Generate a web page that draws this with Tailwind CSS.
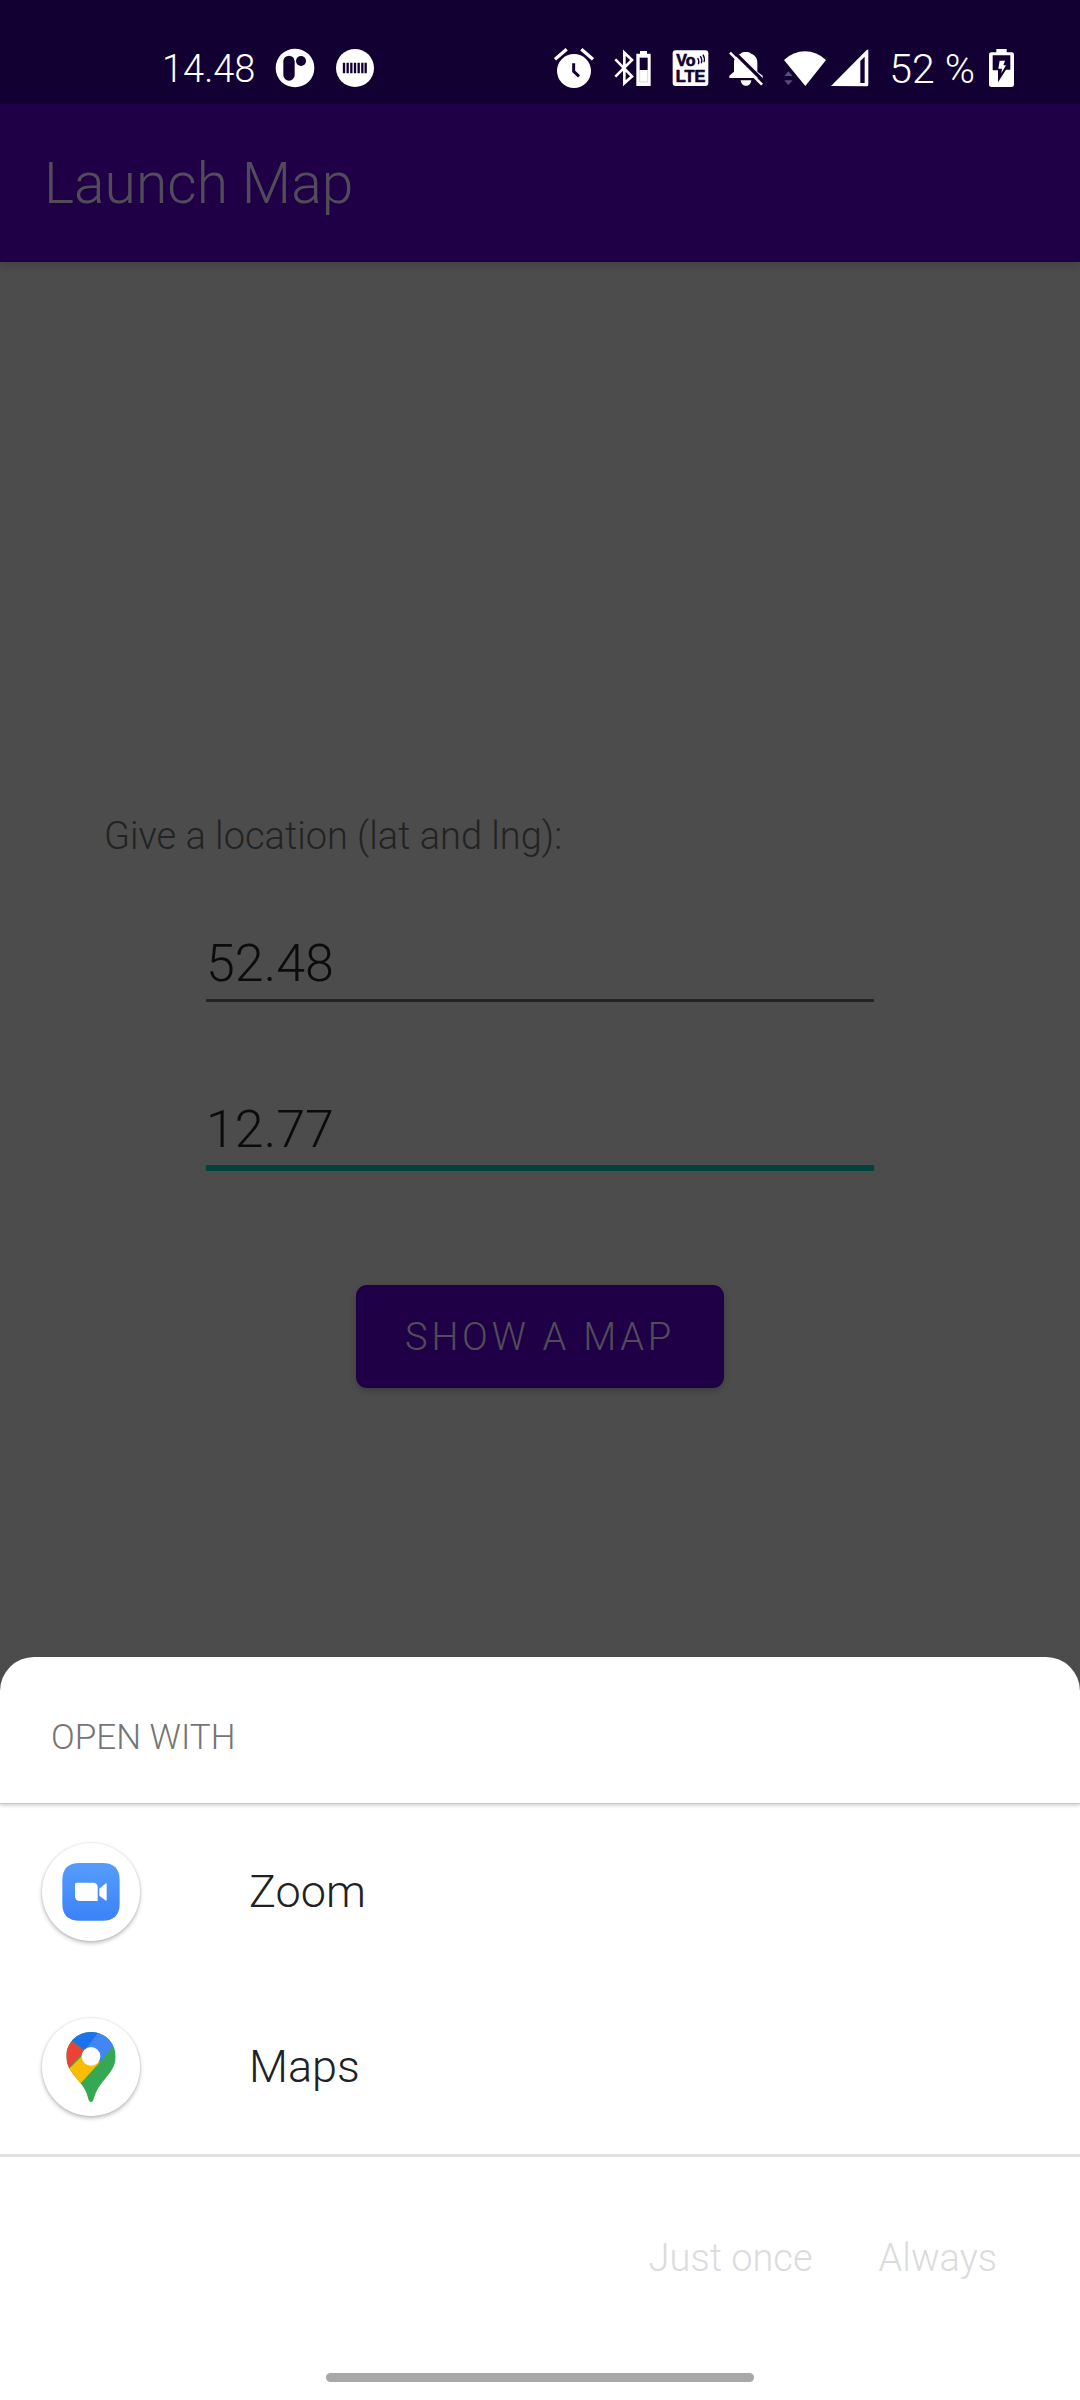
<!DOCTYPE html>
<html lang="en">
<head>
<meta charset="utf-8">
<meta name="viewport" content="width=device-width, initial-scale=1">
<title>Launch Map</title>
<script src="https://cdn.jsdelivr.net/npm/@tailwindcss/browser@4"></script>
</head>
<body class="min-h-screen flex flex-col bg-[#4c4c4c] font-['Roboto','Liberation_Sans',sans-serif] font-light">

<!-- Status bar -->
<div class="h-[104px] bg-[#120032] text-white flex items-end justify-between pl-[162px] pr-[66px] pb-[15px] leading-[40px]">
  <div class="flex items-center gap-5">
    <span class="pt-0.5 text-[38px]">14.48</span>
    <svg class="w-10 h-10" viewBox="411 57 120 120" aria-hidden="true">
      <circle cx="471" cy="117" r="58" fill="#fff"/>
      <rect x="436" y="80" width="34" height="75" rx="17" fill="#120032"/>
      <circle cx="489" cy="96" r="15" fill="#120032"/>
      <path d="M468 80l6 0-5 16z" fill="#fff"/>
    </svg>
    <svg class="w-10 h-10" viewBox="589 57 120 120" aria-hidden="true">
      <circle cx="649" cy="117" r="57" fill="#fff"/>
      <path d="M616 101v32M627 101v32M638 101v32M649 101v32M660 101v32M671 101v32M681 101v32" stroke="#120032" stroke-width="7"/>
    </svg>
  </div>
  <div class="flex items-center gap-5">
    <svg class="w-10 h-10" viewBox="42 57 120 120" aria-hidden="true">
      <circle cx="102" cy="126" r="51" fill="#fff"/>
      <path d="M45 91L80 61M124 61L159 91" stroke="#fff" stroke-width="10"/>
      <path d="M101 103v24l16 15" fill="none" stroke="#120032" stroke-width="9"/>
    </svg>
    <svg class="w-[38px] h-10" viewBox="225 57 114 120" aria-hidden="true">
      <path d="M229 91L279 142L256 163V71L279 93L229 143" fill="none" stroke="#fff" stroke-width="8"/>
      <path d="M303 66h21v8h11v97h-43V74h11z" fill="#fff"/>
      <rect x="302" y="86" width="24" height="37" fill="#120032"/>
      <path d="M302 123v36h24v-36" fill="none" stroke="#c9c5d2" stroke-width="2"/>
    </svg>
    <svg class="w-[37px] h-10" viewBox="398 57 111 120" aria-label="VoLTE">
      <rect x="400" y="64" width="107" height="107" rx="9" fill="#fff"/>
      <g fill="#120032" class="font-['Liberation_Sans',sans-serif] font-bold">
        <text x="411" y="112" font-size="48" stroke="#120032" stroke-width="2">Vo</text>
        <text x="409" y="160" font-size="49" stroke="#120032" stroke-width="2">LTE</text>
      </g>
      <path d="M475 87q6 10 2 19M483 81q7 12 3 22M491 77q7 12 3 22" fill="none" stroke="#120032" stroke-width="4"/>
    </svg>
    <svg class="w-[35px] h-10" viewBox="573 57 105 120" aria-hidden="true">
      <path d="M574 147v-7l14-12v-28c0-14 8-23 20-26 0-7 31-7 31 0 12 4 19 13 19 26v28l16 12v7z" fill="#fff"/>
      <path d="M608 154h32c-2 22-30 22-32 0z" fill="#fff"/>
      <path d="M583 64L680 160" stroke="#120032" stroke-width="10"/>
      <path d="M576 71L672 167" stroke="#fff" stroke-width="8"/>
    </svg>
    <div class="flex items-center gap-[5px]">
      <svg class="w-[42px] h-10" viewBox="45 57 126 120" aria-hidden="true">
        <path d="M45 93q28-26 63-26t63 26l-62 78z" fill="#fff"/>
        <path d="M46 141l12-14 13 14zM46 154h25l-13 14z" fill="#5b4d75"/>
      </svg>
      <svg class="w-[38px] h-10" viewBox="186 57 114 120" aria-hidden="true">
        <path d="M186 171L293 63q5-4 5 2v102q0 5-5 5z" fill="#fff"/>
        <path d="M274 162V96l13-13v79z" fill="#120032"/>
      </svg>
    </div>
    <div class="flex items-center gap-3.5">
      <span class="pt-0.5 text-[41px]">52 %</span>
      <svg class="w-[25px] h-10" viewBox="657 57 75 120" aria-hidden="true">
        <path d="M679 60h31v10h15q7 0 7 8v88q0 8-8 8h-59q-8 0-8-8V78q0-8 7-8h15z" fill="#fff"/>
        <path d="M668 79h53v43h-13L684 160v-36H668z" fill="#120032"/>
        <path d="M689 95h16l-5 14h8l-14 24 2-14h-11z" fill="#fff"/>
      </svg>
    </div>
  </div>
</div>

<!-- App bar -->
<header class="h-[158px] bg-[#1f0047] text-[#524c58] flex items-center px-11 pt-0.5 shadow-[0_3px_8px_rgba(0,0,0,0.15)]">
  <h1 class="text-[57px] leading-[64px]">Launch Map</h1>
</header>

<main class="grow flex flex-col items-center pt-[548px] pb-[269px]">
  <form class="w-full flex flex-col items-center text-[#0b0b0b]">
    <label for="lat" class="w-full px-[104px] text-[38px] leading-[52px] text-[#232323]">Give a location (lat and lng):</label>
    <input id="lat" type="text" value="52.48" class="mt-[62px] w-[668px] max-w-full h-[78px] pt-1 border-b-3 border-[#232323] bg-transparent text-[52px] leading-[60px] outline-none">
    <input id="lng" type="text" value="12.77" aria-label="Longitude" class="mt-[88px] w-[668px] max-w-full h-[81px] pt-1 border-b-6 border-[#00423c] bg-transparent text-[52px] leading-[60px] outline-none">
    <button type="button" class="mt-[114px] h-[103px] px-[49px] rounded-[11px] bg-[#1f0047] text-[#524c58] text-[38px] leading-[52px] tracking-widest shadow-[0_3px_6px_rgba(0,0,0,0.2)]">SHOW A MAP</button>
  </form>
</main>

<!-- App chooser -->
<section class="bg-white rounded-t-[34px] text-[#202124]">
  <h2 class="h-[147px] flex items-center px-[51px] pt-4 text-[35px] leading-[40px] text-[#757575] border-b border-[#c8c8c8] shadow-[0_2px_3px_rgba(0,0,0,0.16)]">OPEN WITH</h2>
  <ul class="border-b-3 border-[#e0e0e0] text-[45px] leading-[56px]">
    <li>
      <button type="button" class="w-full h-[175px] flex items-center gap-[109px] px-[42px]">
        <span class="size-[98px] rounded-full bg-white flex items-center justify-center shadow-[0_2px_4px_rgba(0,0,0,0.28),0_0_2px_rgba(0,0,0,0.1)]">
          <svg class="size-[58px]" viewBox="125 128 174 174" aria-hidden="true">
            <defs><linearGradient id="blue" x1="0" y1="0" x2="0" y2="1"><stop offset="0" stop-color="#559dfc"/><stop offset="1" stop-color="#3c82f8"/></linearGradient></defs>
            <path d="M178 128h68q52 0 52 52v70q0 51-52 51h-68q-52 0-52-51v-70q0-52 52-52z" fill="url(#blue)"/>
            <path d="M170 187h48q14 0 14 14v41h-53q-15 0-15-15v-35q0-5 6-5zM237 205l18-15q4-3 4 2v46q0 5-4 2l-18-14z" fill="#fff"/>
          </svg>
        </span>
        Zoom
      </button>
    </li>
    <li>
      <button type="button" class="w-full h-[175px] flex items-center gap-[109px] px-[42px]">
        <span class="size-[98px] rounded-full bg-white flex items-center justify-center shadow-[0_2px_4px_rgba(0,0,0,0.28),0_0_2px_rgba(0,0,0,0.1)]">
          <svg class="w-[50px] h-[70px]" viewBox="137 94 150 210" aria-hidden="true">
            <clipPath id="pin"><path d="M212 94c-41 0-74 32-74 73 0 32 18 52 42 80 14 17 20 31 24 48 3 12 13 12 16 0 5-19 13-34 26-50 24-29 40-47 40-78 0-41-33-73-74-73z"/></clipPath>
            <g clip-path="url(#pin)">
              <path d="M130 90h170v220H130z" fill="#34a853"/>
              <path d="M130 220L212 140 240 183 181 248 130 290z" fill="#fbbc04"/>
              <path d="M130 90L155 121 192 151 146 202 130 220z" fill="#ea4335"/>
              <path d="M140 90h92l5 4-43 56-39-29z" fill="#1a73e8"/>
              <path d="M233 97l50-7v42l-45 53-46-34z" fill="#4285f4"/>
            </g>
            <circle cx="212" cy="167" r="28" fill="#fff"/>
          </svg>
        </span>
        Maps
      </button>
    </li>
  </ul>
  <div class="flex justify-end gap-[66px] pt-[75px] pr-[83px] text-[38px] leading-[52px] text-[#dcdcdc]">
    <button type="button" disabled>Just once</button>
    <button type="button" disabled>Always</button>
  </div>
  <div class="flex justify-center pt-[89px] pb-[18px]">
    <div class="w-[428px] h-[9px] rounded-full bg-[#a8a8a8]"></div>
  </div>
</section>
</body>
</html>
